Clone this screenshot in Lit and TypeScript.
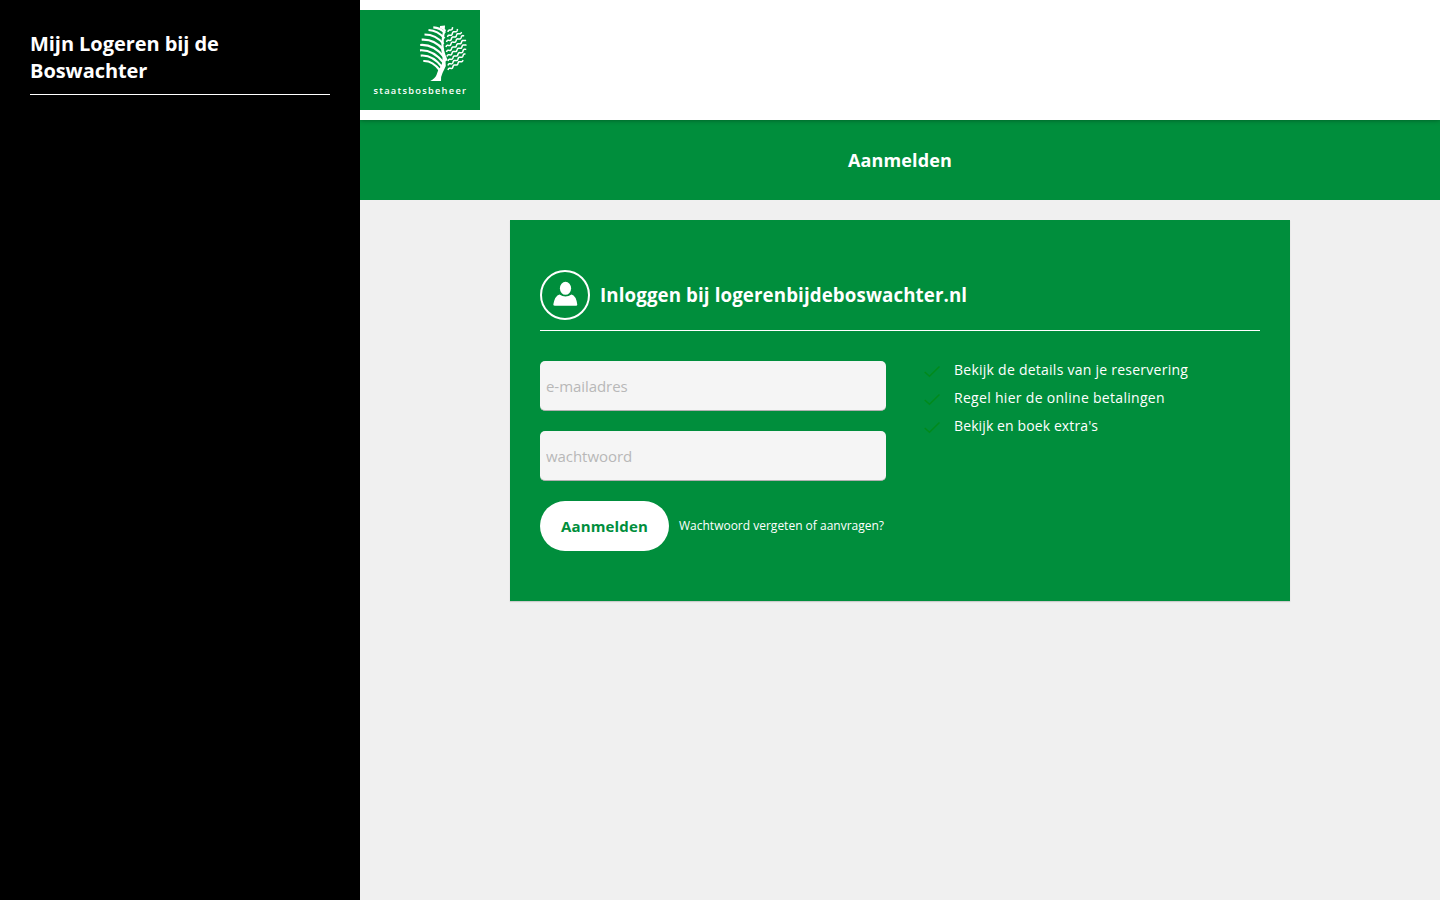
import { LitElement, html, css, svg } from "lit";
import { customElement } from "lit/decorators.js";

const BENEFITS = [
  "Bekijk de details van je reservering",
  "Regel hier de online betalingen",
  "Bekijk en boek extra's",
];

const LEFT_BRANCHES = [
  "M433.300 27.300Q440 27.500 445 33",
  "M428.500 30Q438 30.500 444.500 38.500",
  "M424.500 34.500Q436 34.500 443.500 44",
  "M421.700 39.700Q434.500 39 443.500 50",
  "M420.200 45Q433.500 44 444 57",
  "M420 50.300Q433 49.500 444 63",
  "M420.700 55.600Q432.500 54.500 442.500 67.500",
  "M423.300 61Q432.500 60.500 440 70.500",
];

// Start and end points of the rippled branches.
const RIPPLES: [number, number, number, number][] = [
  [448, 32, 453, 27.5],
  [447.5, 37, 458, 29.5],
  [446.5, 42, 461.5, 32],
  [446, 47, 464, 35.5],
  [446.5, 52, 465.500, 39.5],
  [447, 56.5, 466, 44],
  [448, 61, 466, 49],
  [448, 65.5, 465.5, 54],
  [448, 70, 463, 60],
];

function ripple([x1, y1, x2, y2]: [number, number, number, number]): string {
  const length = Math.hypot(x2 - x1, y2 - y1);
  const steps = Math.ceil(length * 2);
  const nx = -(y2 - y1) / length;
  const ny = (x2 - x1) / length;
  let d = "";
  for (let i = 0; i <= steps; i++) {
    const t = i / steps;
    const wave = -0.8 * Math.sin((t * length * 2 * Math.PI) / 6);
    const x = x1 + (x2 - x1) * t + nx * wave;
    const y = y1 + (y2 - y1) * t + ny * wave;
    d += `${i ? "L" : "M"}${x.toFixed(2)} ${y.toFixed(2)}`;
  }
  return d;
}

@customElement("app-root")
export class AppRoot extends LitElement {
  static styles = css`
    :host {
      display: flex;
      height: 100vh;
      overflow: hidden;
      background: #f0f0f0;
      color: #fff;
      font-family: "Open Sans", sans-serif;
    }
    * { box-sizing: border-box; }
    h1, h2, h3, ul { margin: 0; padding: 0; }
    .sidebar { width: 360px; flex: none; padding: 30px; background: #000; }
    .sidebar-title {
      padding-bottom: 10px;
      border-bottom: 1px solid #fff;
      font-size: 20px;
      line-height: 27px;
      font-weight: 700;
      letter-spacing: -0.06px;
    }
    .main { flex: 1; display: flex; flex-direction: column; }
    .header {
      height: 120px;
      padding: 10px 0;
      background: #fff;
      box-shadow: 0 0 5px rgba(0, 0, 0, 0.4);
      z-index: 1;
      clip-path: inset(0 0 -8px 0);
    }
    .logo { display: block; width: 120px; height: 100px; background: #008e3c; }
    .logo-text { font: 600 9.3px "Open Sans", sans-serif; fill: #fff; }
    .banner {
      height: 80px;
      display: grid;
      place-items: center;
      background: #008e3c;
    }
    .banner h1 { font-size: 18px; line-height: 24px; font-weight: 700; letter-spacing: 0.13px; }
    .card {
      width: 780px;
      height: 381px;
      margin: 20px auto 0;
      padding: 50px 30px;
      background: #008e3c;
      box-shadow: 0 1px 1px rgba(0, 0, 0, 0.15);
    }
    .card-head {
      display: flex;
      align-items: center;
      gap: 10px;
      height: 61px;
      padding-bottom: 10px;
      border-bottom: 1px solid #fff;
    }
    .card-head h2 {
      padding-bottom: 2px;
      font-size: 18.72px;
      line-height: 27px;
      font-weight: 700;
      letter-spacing: 0.11px;
    }
    .user { width: 50px; height: 50px; }
    .columns { display: flex; gap: 38px; margin-top: 30px; }
    .form { width: 346px; display: flex; flex-direction: column; gap: 20px; }
    .field {
      width: 100%;
      height: 50px;
      padding: 0 6px;
      border: 0;
      border-bottom: 1px solid #b0b0b0;
      border-radius: 5px;
      background: #f5f5f5;
      font: 15px "Open Sans", sans-serif;
      letter-spacing: -0.06px;
    }
    .field::placeholder { color: #b8b8b8; opacity: 1; }
    .actions { display: flex; align-items: center; gap: 10px; white-space: nowrap; }
    .submit {
      width: 129px;
      height: 50px;
      padding: 0;
      border: 0;
      border-radius: 25px;
      background: #fff;
      color: #008e3c;
      font: 700 15px "Open Sans", sans-serif;
      letter-spacing: 0.15px;
    }
    .forgot { color: #fff; font-size: 12px; line-height: 18px; text-decoration: none; }
    .benefits { list-style: none; margin-top: -5px; }
    .benefits li {
      display: flex;
      align-items: flex-start;
      height: 28px;
      gap: 14px;
      font-size: 14px;
      line-height: 28px;
      letter-spacing: 0.25px;
    }
    .benefits li:nth-child(2) { letter-spacing: 0.3px; }
    .benefits li:nth-child(3) { letter-spacing: 0.11px; }
    .check { width: 16px; height: 12px; margin-top: 10px; }
  `;

  render() {
    return html`
      <aside class="sidebar"><h3 class="sidebar-title">Mijn Logeren bij de Boswachter</h3></aside>
      <main class="main">
        <header class="header">
          <svg class="logo" viewBox="360 10 120 100" role="img" aria-label="staatsbosbeheer">
            <g fill="none" stroke="#fff" stroke-width="2.200">${LEFT_BRANCHES.map((d) => svg`<path d=${d} />`)}</g>
            <g fill="none" stroke="#fff" stroke-width="1.500">${RIPPLES.map((r) => svg`<path d=${ripple(r)} />`)}</g>
            <path fill="#fff" d="M440 26L445 25.500L444.800 29L446 30L444.500 34L443.800 40L443.500 45Q443.500 50 445.500 55L447.500 60L445.500 61.500L445.800 66Q444 70 442.500 73Q440.500 77 441 81H430.200Q435 78.500 436.500 75Q437.500 72 438.500 69.500Q443 65 442.500 57Q440.500 50 441.500 42Q442 34 443.500 30L440 28Z" />
            <text class="logo-text" x="373.500" y="94" textLength="92.500">staatsbosbeheer</text>
          </svg>
        </header>
        <section class="banner"><h1>Aanmelden</h1></section>
        <section class="card">
          <div class="card-head">
            <svg class="user" viewBox="0 0 50 50">
              <circle cx="25" cy="25" r="24" fill="none" stroke="#fff" stroke-width="2" />
              <ellipse cx="25.500" cy="18.300" rx="5.600" ry="6.500" fill="#fff" />
              <path fill="#fff" d="M19.500 24.500Q25.500 28.500 31.500 24.500Q36 25.500 37.300 34.500Q37.300 35.700 36 35.700H15Q13.300 35.700 13.300 34.500Q15 25.500 19.500 24.500Z" />
            </svg>
            <h2>Inloggen bij logerenbijdeboswachter.nl</h2>
          </div>
          <div class="columns">
            <form class="form">
              <input class="field" type="email" placeholder="e-mailadres" />
              <input class="field" type="password" placeholder="wachtwoord" />
              <div class="actions">
                <button class="submit" type="button">Aanmelden</button>
                <a class="forgot" href="#">Wachtwoord vergeten of aanvragen?</a>
              </div>
            </form>
            <ul class="benefits">
              ${BENEFITS.map((b) => html`<li>
                <svg class="check" viewBox="0 0 16 12"><path d="M.7 6L5.500 10.200L15.500 .5" fill="none" stroke="#008a1c" stroke-width="1.500" /></svg>
                <span>${b}</span>
              </li>`)}
            </ul>
          </div>
        </section>
      </main>
    `;
  }
}
